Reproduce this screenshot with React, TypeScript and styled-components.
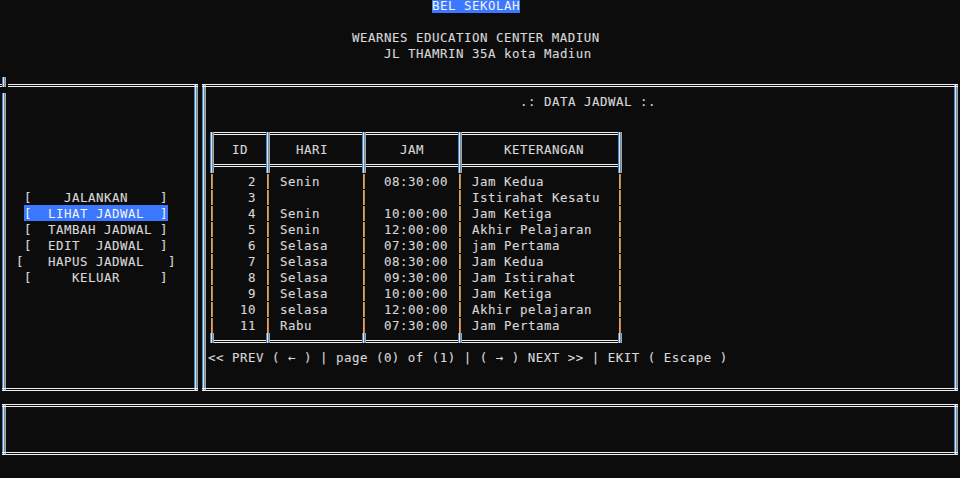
import React from 'react';
import styled, { createGlobalStyle } from 'styled-components';

const COL = {
  bg: '#0c0c0c',
  fg: '#d8d8d8',
  line: '#f0f0f0',
  blue: '#3388dd',
  light: '#dde6ee',
  blue2: '#4a94dc',
  orange: '#d99b5a',
  hi: '#3b78ff',
};

const GlobalStyle = createGlobalStyle`
  html, body { margin: 0; padding: 0; background: ${COL.bg}; overflow: hidden; }
  #root { width: 960px; height: 478px; overflow: hidden; }
`;

const vBar = `linear-gradient(to right, ${COL.blue} 0 1px, ${COL.light} 1px 2px, ${COL.blue2} 2px 3px, ${COL.orange} 3px 4px)`;
const hBar = `linear-gradient(to bottom, ${COL.line} 0 1px, transparent 1px 2px, ${COL.line} 2px 3px)`;
const pipeBar = `linear-gradient(to right, #e2a264 0 1px, #b98556 1px 2px)`;

type Layer = [string, string, string];

const layersCss = (layers: Layer[]) => `
  background-repeat: no-repeat;
  background-image: ${layers.map((l) => l[0]).join(', ')};
  background-position: ${layers.map((l) => l[1]).join(', ')};
  background-size: ${layers.map((l) => l[2]).join(', ')};
`;

const Screen = styled.div`
  margin-top: -3px;
  width: 960px;
  font-family: 'DejaVu Sans Mono', 'Liberation Mono', monospace;
  font-size: 12.4px;
  letter-spacing: 0.5346px;
  color: ${COL.fg};
  text-shadow: -0.5px 0 rgba(50, 130, 230, 0.22), 0.5px 0 rgba(230, 150, 70, 0.22);
`;

const Line = styled.div<{ $indent?: number }>`
  height: 16px;
  line-height: 17px;
  white-space: pre;
  padding-left: ${(p) => (p.$indent ?? 0) * 8}px;
`;

const Hi = styled.span`
  display: inline-block;
  height: 16px;
  vertical-align: top;
  background: ${COL.hi};
  color: #f4f4f4;
  text-shadow: none;
`;

const MainRow = styled.div`
  display: flex;
`;

const Panel = styled.div<{ $w: number; $h: number; $glitch?: boolean }>`
  flex: none;
  box-sizing: border-box;
  width: ${(p) => p.$w * 8}px;
  height: ${(p) => p.$h * 16}px;
  ${(p) => {
    const layers: Layer[] = [
      p.$glitch
        ? [hBar, 'left 8px top 7px', 'calc(100% - 10px) 3px']
        : [hBar, 'left 2px top 7px', 'calc(100% - 4px) 3px'],
      [hBar, 'left 2px bottom 6px', 'calc(100% - 4px) 3px'],
      p.$glitch
        ? [vBar, 'left 2px top 16px', '4px calc(100% - 22px)']
        : [vBar, 'left 2px top 7px', '4px calc(100% - 13px)'],
      [vBar, 'right 2px top 7px', '4px calc(100% - 13px)'],
    ];
    if (p.$glitch) {
      layers.push([vBar, 'left 2px top 0px', '4px 10px']);
      layers.push([hBar, 'left 0px top 7px', '6px 3px']);
    }
    return layersCss(layers);
  }}
`;

const MenuBox = styled.div`
  padding-top: 112px;
`;

const RightBody = styled.div`
  padding-top: 16px;
`;

const TableGrid = styled.div`
  margin-left: 8px;
  display: grid;
  grid-template-columns: 8px 48px 8px 88px 8px 88px 8px 152px 8px;
  grid-auto-rows: 16px;
  width: 416px;
`;

type Kind =
  | 'h' | 'tl' | 'tt' | 'tr' | 'v' | 'ml' | 'mc' | 'mr'
  | 'pipe' | 'bl' | 'bt' | 'br' | 'text';

const kindLayers = (k: Kind): Layer[] => {
  const hFull: Layer = [hBar, 'left 0px top 7px', '100% 3px'];
  const hRight: Layer = [hBar, 'left 2px top 7px', 'calc(100% - 2px) 3px'];
  const hLeft: Layer = [hBar, 'left 0px top 7px', '6px 3px'];
  const vDown: Layer = [vBar, 'left 2px top 7px', '4px 9px'];
  const vFull: Layer = [vBar, 'left 2px top 0px', '4px 16px'];
  const vUp: Layer = [vBar, 'left 2px top 0px', '4px 10px'];
  switch (k) {
    case 'h': return [hFull];
    case 'tl': return [vDown, hRight];
    case 'tt': return [vDown, hFull];
    case 'tr': return [vDown, hLeft];
    case 'v': return [vFull];
    case 'ml': return [vFull, hRight];
    case 'mc': return [vFull, hFull];
    case 'mr': return [vFull, hLeft];
    case 'pipe': return [[pipeBar, 'left 3px top 1px', '2px 15px']];
    case 'bl': return [vUp, hRight];
    case 'bt': return [vUp, hFull];
    case 'br': return [vUp, hLeft];
    default: return [];
  }
};

const Cell = styled.div<{ $kind: Kind }>`
  white-space: pre;
  line-height: 17px;
  overflow: visible;
  ${(p) => (p.$kind === 'text' ? '' : layersCss(kindLayers(p.$kind)))}
`;

type Row = { id: number; hari: string; jam: string; ket: string };

const rows: Row[] = [
  { id: 2, hari: 'Senin', jam: '08:30:00', ket: 'Jam Kedua' },
  { id: 3, hari: '', jam: '', ket: 'Istirahat Kesatu' },
  { id: 4, hari: 'Senin', jam: '10:00:00', ket: 'Jam Ketiga' },
  { id: 5, hari: 'Senin', jam: '12:00:00', ket: 'Akhir Pelajaran' },
  { id: 6, hari: 'Selasa', jam: '07:30:00', ket: 'jam Pertama' },
  { id: 7, hari: 'Selasa', jam: '08:30:00', ket: 'Jam Kedua' },
  { id: 8, hari: 'Selasa', jam: '09:30:00', ket: 'Jam Istirahat' },
  { id: 9, hari: 'Selasa', jam: '10:00:00', ket: 'Jam Ketiga' },
  { id: 10, hari: 'selasa', jam: '12:00:00', ket: 'Akhir pelajaran' },
  { id: 11, hari: 'Rabu', jam: '07:30:00', ket: 'Jam Pertama' },
];

const borderRow = (l: Kind, m: Kind, r: Kind, key: string) => {
  const kinds: Kind[] = [l, 'h', m, 'h', m, 'h', m, 'h', r];
  return kinds.map((k, i) => <Cell key={`${key}-${i}`} $kind={k} />);
};

const textRow = (sep: Kind, texts: string[], key: string) => {
  const out: React.ReactNode[] = [];
  texts.forEach((t, i) => {
    out.push(<Cell key={`${key}-s${i}`} $kind={sep} />);
    out.push(<Cell key={`${key}-t${i}`} $kind="text">{t}</Cell>);
  });
  out.push(<Cell key={`${key}-end`} $kind={sep} />);
  return out;
};

const Table = () => (
  <TableGrid>
    {borderRow('tl', 'tt', 'tr', 'top')}
    {textRow('v', ['  ID', '   HARI', '    JAM', '     KETERANGAN'], 'head')}
    {borderRow('ml', 'mc', 'mr', 'mid')}
    {rows.map((r) =>
      textRow(
        'pipe',
        [String(r.id).padStart(5, ' '), ' ' + r.hari, '  ' + r.jam, ' ' + r.ket],
        `r${r.id}`
      )
    )}
    {borderRow('bl', 'bt', 'br', 'bot')}
  </TableGrid>
);

const menu: { text: string; indent: number; active?: boolean }[] = [
  { text: '[    JALANKAN    ]', indent: 3 },
  { text: '[  LIHAT JADWAL  ]', indent: 3, active: true },
  { text: '[  TAMBAH JADWAL ]', indent: 3 },
  { text: '[  EDIT  JADWAL  ]', indent: 3 },
  { text: '[   HAPUS JADWAL   ]', indent: 2 },
  { text: '[     KELUAR     ]', indent: 3 },
];

export default function App() {
  return (
    <>
      <GlobalStyle />
      <Screen>
        <Line $indent={54}>
          <Hi>BEL SEKOLAH</Hi>
        </Line>
        <Line />
        <Line $indent={44}>WEARNES EDUCATION CENTER MADIUN</Line>
        <Line $indent={48}>JL THAMRIN 35A kota Madiun</Line>
        <Line />
        <MainRow>
          <Panel $w={25} $h={20} $glitch>
            <MenuBox>
              {menu.map((m) => (
                <Line key={m.text} $indent={m.indent}>
                  {m.active ? <Hi>{m.text}</Hi> : m.text}
                </Line>
              ))}
            </MenuBox>
          </Panel>
          <Panel $w={95} $h={20}>
            <RightBody>
              <Line $indent={40}>.: DATA JADWAL :.</Line>
              <Line />
              <Table />
              <Line $indent={1}>{'<< PREV ( \u2190 ) | page (0) of (1) | ( \u2192 ) NEXT >> | EKIT ( Escape )'}</Line>
            </RightBody>
          </Panel>
        </MainRow>
        <Panel $w={120} $h={4} />
      </Screen>
    </>
  );
}
